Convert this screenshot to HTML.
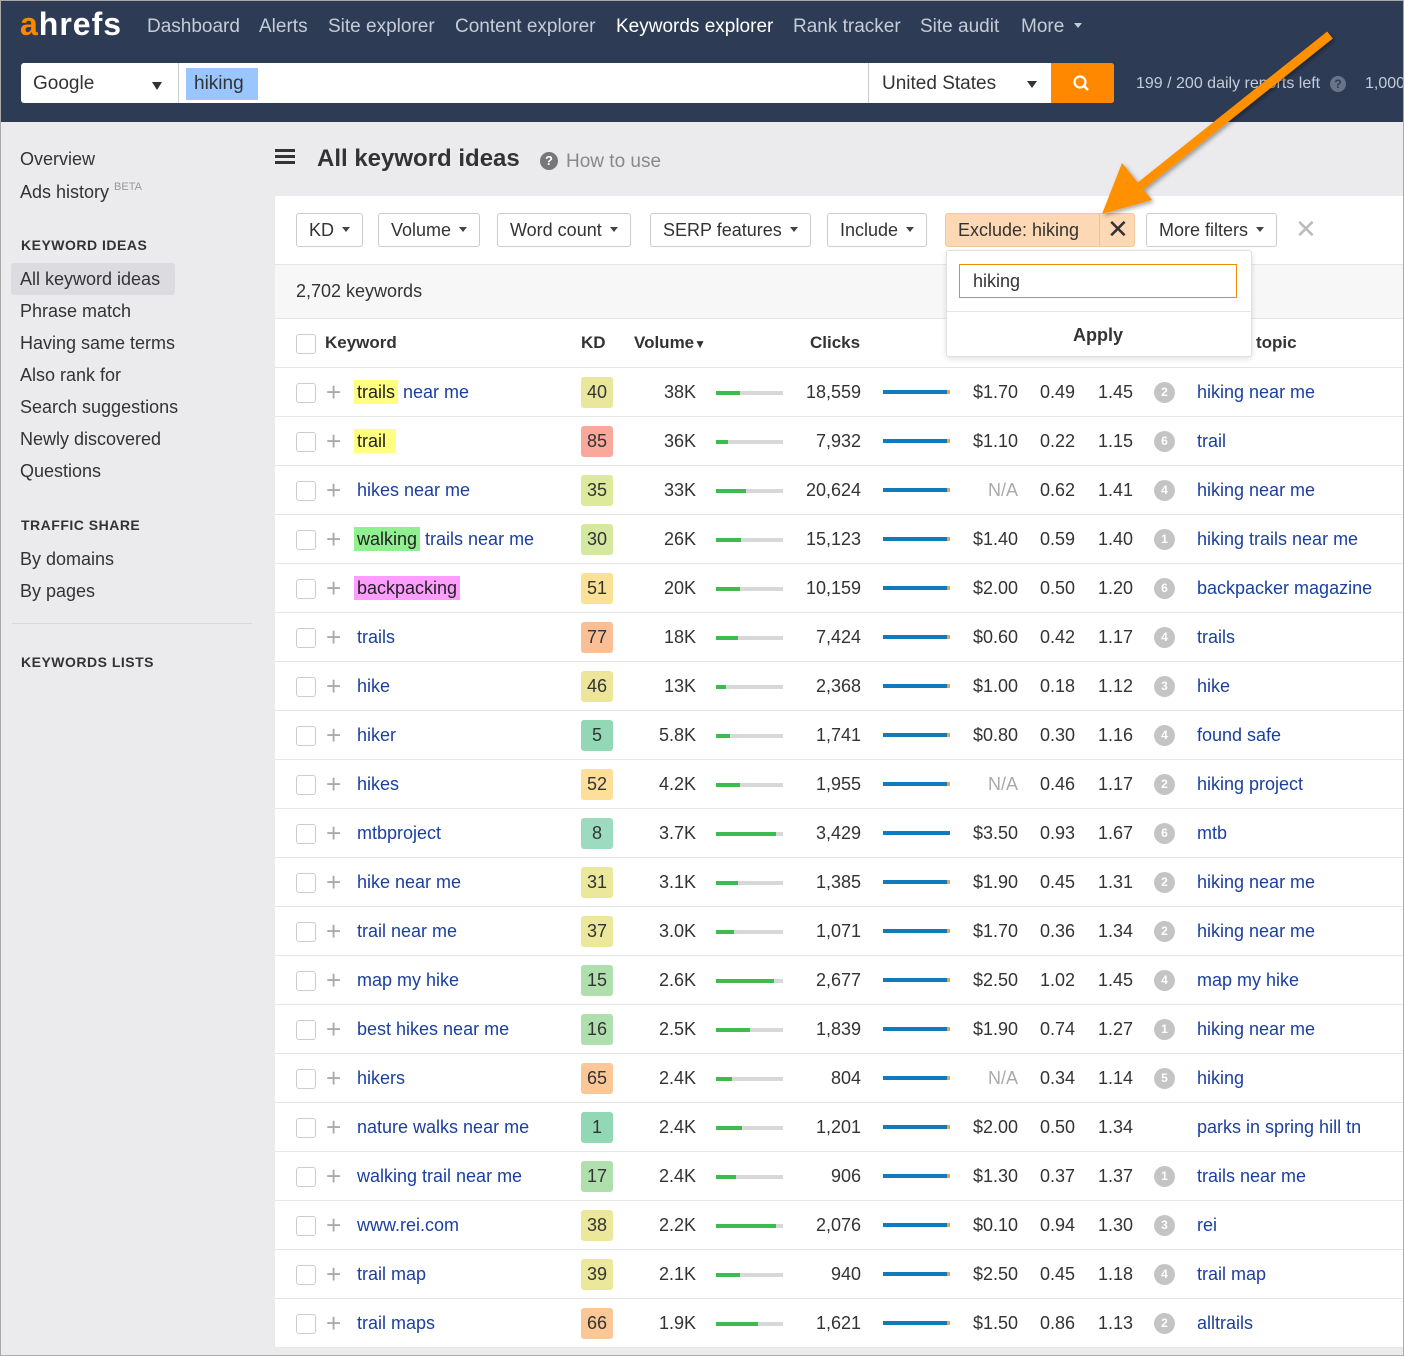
<!DOCTYPE html>
<html><head><meta charset="utf-8"><style>
*{box-sizing:border-box;margin:0;padding:0}
body{width:1404px;height:1356px;overflow:hidden;font-family:"Liberation Sans",Arial,sans-serif;background:#ebebee;position:relative;color:#333;font-size:18px}
.a{position:absolute;white-space:nowrap}
#nav{position:absolute;left:0;top:0;width:1404px;height:122px;background:#2d3b55;border:1px solid #aaa;border-bottom:none}
.nl{color:#c5ccd8;font-size:19px;top:15px}
#side .a{font-size:18px;color:#333}
#side .hd{font-size:14px;font-weight:bold;letter-spacing:0.5px;color:#333}
.fb{position:absolute;top:213px;height:34px;border:1px solid #ccc;border-radius:3px;background:#fff;font-size:18px;line-height:32px;padding:0 12px;color:#333}
.car{display:inline-block;width:0;height:0;border-left:4px solid transparent;border-right:4px solid transparent;border-top:5px solid #444;vertical-align:middle;margin-left:8px;margin-top:-3px}
.r{position:absolute;left:275px;width:1129px;height:49px;border-bottom:1px solid #e6e6e6;background:#fff}
.r span{position:absolute;top:14px;font-size:18px;white-space:nowrap}
.cb{left:21px;top:15px!important;width:20px;height:20px;border:1px solid #ccc;border-radius:3px;background:#fff}
.pl{left:51px;top:9px!important;color:#aaa;font-size:26px!important}
.kw{left:82px;color:#1a3fa0}
.kd{left:306px;top:9px!important;width:32px;height:31px;border-radius:3px;text-align:center;line-height:31px;color:#333}
.vo{right:708px;color:#333}
.vb{left:441px;top:23px!important;width:67px;height:4px;background:#d8d8d8}
.vb i{display:block;height:4px;background:#3dbb4e}
.cl{right:543px;color:#333}
.cbb{left:608px;top:22px!important;width:67px;height:4px;background:#0f7bbd;border-right:3px solid #f5a142}
.cp{right:386px}
.cs{right:329px}
.rr{right:271px}
.ps{left:879px;top:14px!important;width:21px;height:21px;border-radius:50%;background:#c4c4c4;color:#fff;font-size:12px!important;font-weight:bold;text-align:center;line-height:21px}
.tp{left:922px;color:#1a3fa0}
.na{color:#aaa}
.y{background:#ffff80;padding:2px 3px;margin-left:-3px;color:#222}
.g{background:#8ef08e;padding:2px 3px;margin-left:-3px;color:#222}
.p{background:#ff9cff;padding:2px 3px;margin-left:-3px;color:#222}
</style></head><body>
<div id="nav">
<div class="a" style="left:19px;top:5px;font-size:32px;font-weight:bold;color:#fff;letter-spacing:1px"><span style="color:#ff8800">a</span>hrefs</div>
<div class="a nl" style="left:146px">Dashboard</div>
<div class="a nl" style="left:258px">Alerts</div>
<div class="a nl" style="left:327px">Site explorer</div>
<div class="a nl" style="left:454px">Content explorer</div>
<div class="a nl" style="left:615px;color:#fff">Keywords explorer</div>
<div class="a nl" style="left:792px">Rank tracker</div>
<div class="a nl" style="left:919px">Site audit</div>
<div class="a nl" style="left:1020px">More <span class="car" style="border-top-color:#c5ccd8;margin-left:4px"></span></div>
<div class="a" style="left:20px;top:62px;width:1093px;height:40px;background:#fff;border-radius:3px"></div>
<div class="a" style="left:32px;top:72px;font-size:19px;color:#333">Google</div>
<div class="a" style="left:151px;top:81px;border-left:5px solid transparent;border-right:5px solid transparent;border-top:8px solid #333"></div>
<div class="a" style="left:177px;top:62px;width:1px;height:40px;background:#ccc"></div>
<div class="a" style="left:185px;top:67px;width:72px;height:32px;background:#99c6ff"></div>
<div class="a" style="left:193px;top:72px;font-size:19px;color:#333">hiking</div>
<div class="a" style="left:867px;top:62px;width:1px;height:40px;background:#ccc"></div>
<div class="a" style="left:881px;top:72px;font-size:19px;color:#333">United States</div>
<div class="a" style="left:1026px;top:80px;border-left:5px solid transparent;border-right:5px solid transparent;border-top:7px solid #333"></div>
<div class="a" style="left:1050px;top:62px;width:63px;height:40px;background:#ff8800;border-radius:0 3px 3px 0"></div>
<svg class="a" style="left:1071px;top:73px" width="20" height="20" viewBox="0 0 20 20"><circle cx="8" cy="8" r="5.5" fill="none" stroke="#fff" stroke-width="2.2"/><line x1="12" y1="12" x2="16" y2="16" stroke="#fff" stroke-width="2.5"/></svg>
<div class="a" style="left:1135px;top:74px;font-size:16px;color:#c5ccd8">199 / 200 daily reports left</div>
<div class="a" style="left:1329px;top:75px;width:16px;height:16px;border-radius:50%;background:#6a7489;color:#2d3b55;font-size:12px;font-weight:bold;text-align:center;line-height:16px">?</div>
<div class="a" style="left:1364px;top:74px;font-size:16px;color:#c5ccd8">1,000</div>
</div>
<div id="side">
<div class="a" style="left:20px;top:149px">Overview</div>
<div class="a" style="left:20px;top:181px">Ads history <sup style="font-size:11px;color:#999;vertical-align:8px">BETA</sup></div>
<div class="a hd" style="left:21px;top:237px">KEYWORD IDEAS</div>
<div class="a" style="left:11px;top:263px;width:164px;height:32px;background:#dcdce0;border-radius:3px"></div>
<div class="a" style="left:20px;top:269px">All keyword ideas</div>
<div class="a" style="left:20px;top:301px">Phrase match</div>
<div class="a" style="left:20px;top:333px">Having same terms</div>
<div class="a" style="left:20px;top:365px">Also rank for</div>
<div class="a" style="left:20px;top:397px">Search suggestions</div>
<div class="a" style="left:20px;top:429px">Newly discovered</div>
<div class="a" style="left:20px;top:461px">Questions</div>
<div class="a hd" style="left:21px;top:517px">TRAFFIC SHARE</div>
<div class="a" style="left:20px;top:549px">By domains</div>
<div class="a" style="left:20px;top:581px">By pages</div>
<div class="a" style="left:12px;top:623px;width:240px;height:1px;background:#d8d8d8"></div>
<div class="a hd" style="left:21px;top:654px">KEYWORDS LISTS</div>
</div>
<div class="a" style="left:275px;top:149px;width:20px;height:3px;background:#333;box-shadow:0 6px 0 #333,0 12px 0 #333;width:20px"></div>
<div class="a" style="left:317px;top:145px;font-size:24px;font-weight:bold;color:#333">All keyword ideas</div>
<div class="a" style="left:540px;top:152px;width:18px;height:18px;border-radius:50%;background:#777;color:#fff;font-size:13px;font-weight:bold;text-align:center;line-height:18px">?</div>
<div class="a" style="left:566px;top:151px;font-size:19px;color:#888">How to use</div>
<div class="a" style="left:275px;top:196px;width:1129px;height:68px;background:#fff"></div>
<div class="fb" style="left:296px">KD<span class="car"></span></div>
<div class="fb" style="left:378px">Volume<span class="car"></span></div>
<div class="fb" style="left:497px">Word count<span class="car"></span></div>
<div class="fb" style="left:650px">SERP features<span class="car"></span></div>
<div class="fb" style="left:827px">Include<span class="car"></span></div>
<div class="fb" style="left:945px;width:190px;background:#fdd8b5;border-color:#f5c89c">Exclude: hiking</div>
<div class="a" style="left:1099px;top:214px;width:1px;height:32px;background:#f0c090"></div>
<div class="a" style="left:1107px;top:214px;font-size:26px;color:#333">✕</div>
<div class="fb" style="left:1146px">More filters<span class="car"></span></div>
<div class="a" style="left:1295px;top:214px;font-size:26px;color:#bbb">✕</div>
<div class="a" style="left:275px;top:264px;width:1129px;height:54px;background:#f7f7f8;border-top:1px solid #e5e5e5"></div>
<div class="a" style="left:296px;top:281px;font-size:18px">2,702 keywords</div>
<div class="a" style="left:275px;top:318px;width:1129px;height:50px;background:#fff;border-top:1px solid #e5e5e5;border-bottom:1px solid #e5e5e5"></div>
<div class="a" style="left:296px;top:334px;width:20px;height:20px;border:1px solid #ccc;border-radius:3px"></div>
<div class="a" style="left:325px;top:333px;font-weight:bold;font-size:17px">Keyword</div>
<div class="a" style="left:581px;top:333px;font-weight:bold;font-size:17px">KD</div>
<div class="a" style="left:634px;top:333px;font-weight:bold;font-size:17px">Volume<span style="font-size:12px">▼</span></div>
<div class="a" style="left:810px;top:333px;font-weight:bold;font-size:17px">Clicks</div>
<div class="a" style="left:1256px;top:333px;font-weight:bold;font-size:17px">topic</div>

<div class="r" style="top:368px"><span class="cb"></span><span class="pl">+</span><span class="kw"><b class="y" style="font-weight:normal">trails</b> near me</span><span class="kd" style="background:#e9e79b">40</span><span class="vo">38K</span><span class="vb"><i style="width:24px"></i></span><span class="cl">18,559</span><span class="cbb"></span><span class="cp">$1.70</span><span class="cs">0.49</span><span class="rr">1.45</span><span class="ps">2</span><span class="tp">hiking near me</span></div>
<div class="r" style="top:417px"><span class="cb"></span><span class="pl">+</span><span class="kw"><b class="y" style="font-weight:normal;padding-right:10px">trail</b></span><span class="kd" style="background:#f9a89b">85</span><span class="vo">36K</span><span class="vb"><i style="width:12px"></i></span><span class="cl">7,932</span><span class="cbb"></span><span class="cp">$1.10</span><span class="cs">0.22</span><span class="rr">1.15</span><span class="ps">6</span><span class="tp">trail</span></div>
<div class="r" style="top:466px"><span class="cb"></span><span class="pl">+</span><span class="kw">hikes near me</span><span class="kd" style="background:#dde99b">35</span><span class="vo">33K</span><span class="vb"><i style="width:30px"></i></span><span class="cl">20,624</span><span class="cbb"></span><span class="cp na">N/A</span><span class="cs">0.62</span><span class="rr">1.41</span><span class="ps">4</span><span class="tp">hiking near me</span></div>
<div class="r" style="top:515px"><span class="cb"></span><span class="pl">+</span><span class="kw"><b class="g" style="font-weight:normal">walking</b> trails near me</span><span class="kd" style="background:#d4e8a0">30</span><span class="vo">26K</span><span class="vb"><i style="width:25px"></i></span><span class="cl">15,123</span><span class="cbb"></span><span class="cp">$1.40</span><span class="cs">0.59</span><span class="rr">1.40</span><span class="ps">1</span><span class="tp">hiking trails near me</span></div>
<div class="r" style="top:564px"><span class="cb"></span><span class="pl">+</span><span class="kw"><b class="p" style="font-weight:normal">backpacking</b></span><span class="kd" style="background:#fbe196">51</span><span class="vo">20K</span><span class="vb"><i style="width:24px"></i></span><span class="cl">10,159</span><span class="cbb"></span><span class="cp">$2.00</span><span class="cs">0.50</span><span class="rr">1.20</span><span class="ps">6</span><span class="tp">backpacker magazine</span></div>
<div class="r" style="top:613px"><span class="cb"></span><span class="pl">+</span><span class="kw">trails</span><span class="kd" style="background:#fbbf95">77</span><span class="vo">18K</span><span class="vb"><i style="width:22px"></i></span><span class="cl">7,424</span><span class="cbb"></span><span class="cp">$0.60</span><span class="cs">0.42</span><span class="rr">1.17</span><span class="ps">4</span><span class="tp">trails</span></div>
<div class="r" style="top:662px"><span class="cb"></span><span class="pl">+</span><span class="kw">hike</span><span class="kd" style="background:#ede59a">46</span><span class="vo">13K</span><span class="vb"><i style="width:10px"></i></span><span class="cl">2,368</span><span class="cbb"></span><span class="cp">$1.00</span><span class="cs">0.18</span><span class="rr">1.12</span><span class="ps">3</span><span class="tp">hike</span></div>
<div class="r" style="top:711px"><span class="cb"></span><span class="pl">+</span><span class="kw">hiker</span><span class="kd" style="background:#93d8b4">5</span><span class="vo">5.8K</span><span class="vb"><i style="width:14px"></i></span><span class="cl">1,741</span><span class="cbb"></span><span class="cp">$0.80</span><span class="cs">0.30</span><span class="rr">1.16</span><span class="ps">4</span><span class="tp">found safe</span></div>
<div class="r" style="top:760px"><span class="cb"></span><span class="pl">+</span><span class="kw">hikes</span><span class="kd" style="background:#fddf9a">52</span><span class="vo">4.2K</span><span class="vb"><i style="width:24px"></i></span><span class="cl">1,955</span><span class="cbb"></span><span class="cp na">N/A</span><span class="cs">0.46</span><span class="rr">1.17</span><span class="ps">2</span><span class="tp">hiking project</span></div>
<div class="r" style="top:809px"><span class="cb"></span><span class="pl">+</span><span class="kw">mtbproject</span><span class="kd" style="background:#9ddbc0">8</span><span class="vo">3.7K</span><span class="vb"><i style="width:60px"></i></span><span class="cl">3,429</span><span class="cbb" style="border-right:none"></span><span class="cp">$3.50</span><span class="cs">0.93</span><span class="rr">1.67</span><span class="ps">6</span><span class="tp">mtb</span></div>
<div class="r" style="top:858px"><span class="cb"></span><span class="pl">+</span><span class="kw">hike near me</span><span class="kd" style="background:#ebe79b">31</span><span class="vo">3.1K</span><span class="vb"><i style="width:22px"></i></span><span class="cl">1,385</span><span class="cbb"></span><span class="cp">$1.90</span><span class="cs">0.45</span><span class="rr">1.31</span><span class="ps">2</span><span class="tp">hiking near me</span></div>
<div class="r" style="top:907px"><span class="cb"></span><span class="pl">+</span><span class="kw">trail near me</span><span class="kd" style="background:#ebe79b">37</span><span class="vo">3.0K</span><span class="vb"><i style="width:18px"></i></span><span class="cl">1,071</span><span class="cbb"></span><span class="cp">$1.70</span><span class="cs">0.36</span><span class="rr">1.34</span><span class="ps">2</span><span class="tp">hiking near me</span></div>
<div class="r" style="top:956px"><span class="cb"></span><span class="pl">+</span><span class="kw">map my hike</span><span class="kd" style="background:#b0dfae">15</span><span class="vo">2.6K</span><span class="vb"><i style="width:58px"></i></span><span class="cl">2,677</span><span class="cbb"></span><span class="cp">$2.50</span><span class="cs">1.02</span><span class="rr">1.45</span><span class="ps">4</span><span class="tp">map my hike</span></div>
<div class="r" style="top:1005px"><span class="cb"></span><span class="pl">+</span><span class="kw">best hikes near me</span><span class="kd" style="background:#b0dfae">16</span><span class="vo">2.5K</span><span class="vb"><i style="width:34px"></i></span><span class="cl">1,839</span><span class="cbb"></span><span class="cp">$1.90</span><span class="cs">0.74</span><span class="rr">1.27</span><span class="ps">1</span><span class="tp">hiking near me</span></div>
<div class="r" style="top:1054px"><span class="cb"></span><span class="pl">+</span><span class="kw">hikers</span><span class="kd" style="background:#fcc796">65</span><span class="vo">2.4K</span><span class="vb"><i style="width:16px"></i></span><span class="cl">804</span><span class="cbb"></span><span class="cp na">N/A</span><span class="cs">0.34</span><span class="rr">1.14</span><span class="ps">5</span><span class="tp">hiking</span></div>
<div class="r" style="top:1103px"><span class="cb"></span><span class="pl">+</span><span class="kw">nature walks near me</span><span class="kd" style="background:#93d8b4">1</span><span class="vo">2.4K</span><span class="vb"><i style="width:26px"></i></span><span class="cl">1,201</span><span class="cbb"></span><span class="cp">$2.00</span><span class="cs">0.50</span><span class="rr">1.34</span><span class="tp">parks in spring hill tn</span></div>
<div class="r" style="top:1152px"><span class="cb"></span><span class="pl">+</span><span class="kw">walking trail near me</span><span class="kd" style="background:#b0dfae">17</span><span class="vo">2.4K</span><span class="vb"><i style="width:20px"></i></span><span class="cl">906</span><span class="cbb"></span><span class="cp">$1.30</span><span class="cs">0.37</span><span class="rr">1.37</span><span class="ps">1</span><span class="tp">trails near me</span></div>
<div class="r" style="top:1201px"><span class="cb"></span><span class="pl">+</span><span class="kw">www.rei.com</span><span class="kd" style="background:#ebe79b">38</span><span class="vo">2.2K</span><span class="vb"><i style="width:60px"></i></span><span class="cl">2,076</span><span class="cbb"></span><span class="cp">$0.10</span><span class="cs">0.94</span><span class="rr">1.30</span><span class="ps">3</span><span class="tp">rei</span></div>
<div class="r" style="top:1250px"><span class="cb"></span><span class="pl">+</span><span class="kw">trail map</span><span class="kd" style="background:#ebe79b">39</span><span class="vo">2.1K</span><span class="vb"><i style="width:24px"></i></span><span class="cl">940</span><span class="cbb"></span><span class="cp">$2.50</span><span class="cs">0.45</span><span class="rr">1.18</span><span class="ps">4</span><span class="tp">trail map</span></div>
<div class="r" style="top:1299px"><span class="cb"></span><span class="pl">+</span><span class="kw">trail maps</span><span class="kd" style="background:#fcc796">66</span><span class="vo">1.9K</span><span class="vb"><i style="width:42px"></i></span><span class="cl">1,621</span><span class="cbb"></span><span class="cp">$1.50</span><span class="cs">0.86</span><span class="rr">1.13</span><span class="ps">2</span><span class="tp">alltrails</span></div>

<div class="a" style="left:946px;top:250px;width:306px;height:107px;background:#fff;border:1px solid #e0e0e0;border-radius:3px;box-shadow:0 2px 6px rgba(0,0,0,.12)"></div>
<div class="a" style="left:959px;top:264px;width:278px;height:34px;border:1px solid #f08c00;background:#fff"></div>
<div class="a" style="left:973px;top:271px;font-size:18px;color:#333">hiking</div>
<div class="a" style="left:947px;top:311px;width:304px;height:1px;background:#e5e5e5"></div>
<div class="a" style="left:1073px;top:325px;font-size:18px;font-weight:bold;color:#333">Apply</div>

<svg class="a" style="left:0;top:0" width="1404" height="1356"><defs><filter id="sh"><feDropShadow dx="2" dy="2" stdDeviation="2" flood-opacity="0.35"/></filter></defs><g filter="url(#sh)"><line x1="1330" y1="35" x2="1138" y2="188" stroke="#ff9100" stroke-width="9"/><polygon points="1102,214 1122,163 1152,200" fill="#ff9100"/></g></svg>
<div class="a" style="left:0;top:0;width:1404px;height:1356px;border:1px solid #aaa;pointer-events:none"></div>
</body></html>
